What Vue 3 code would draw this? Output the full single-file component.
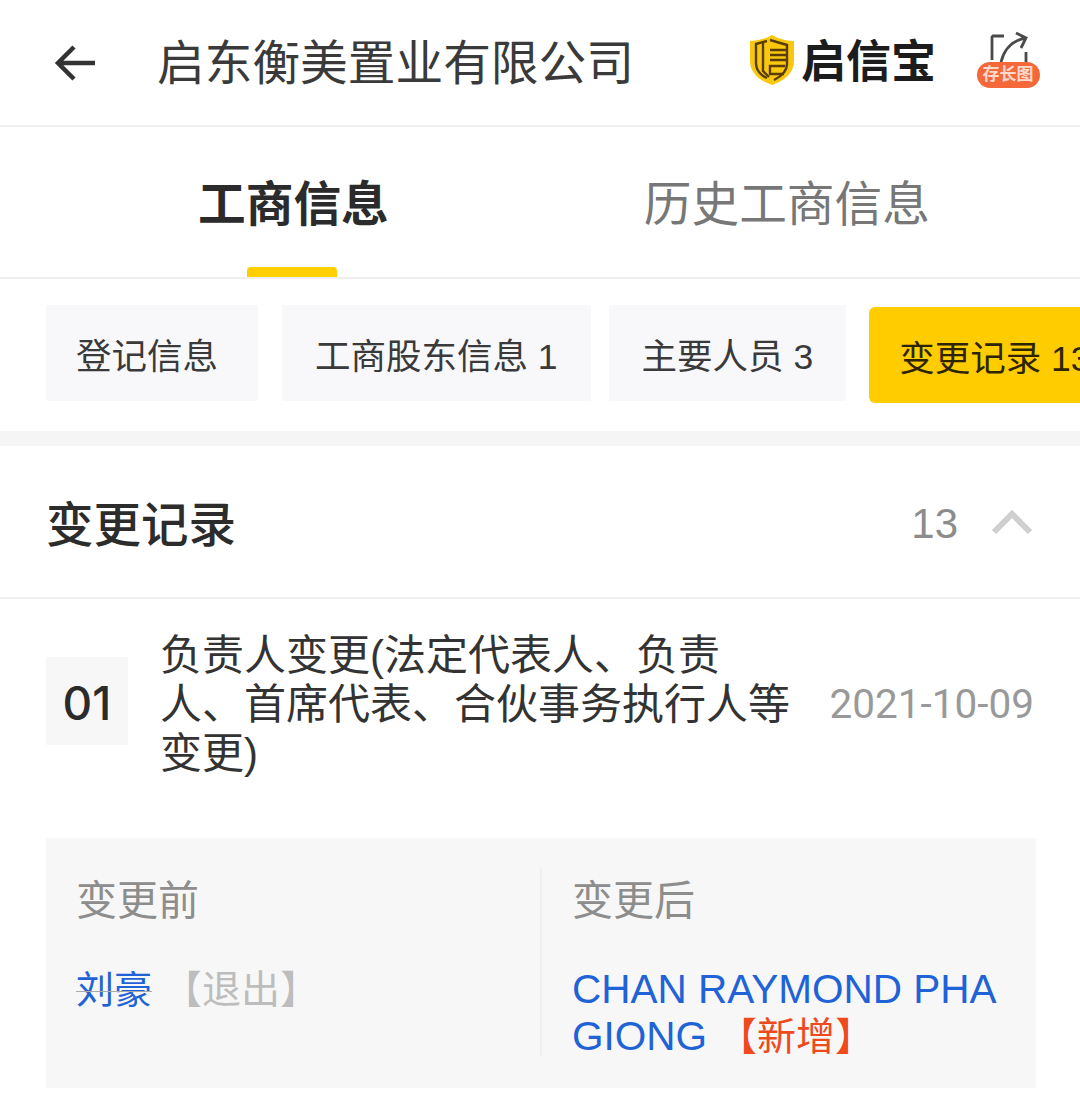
<template>
  <div class="page">
    <!-- 顶部导航 -->
    <header class="nav">
      <svg class="back" viewBox="0 0 44 40" width="44" height="40">
        <path d="M41 20H4M20 4L4 20l16 16" fill="none" stroke="#333" stroke-width="4.5" />
      </svg>
      <div class="nav-title">启东衡美置业有限公司</div>
      <div class="brand">
        <svg class="shield" viewBox="0 0 46 52" width="46" height="52">
          <path d="M23 1c7 4 15 6 22 6v20c0 12-10 20-22 24C11 47 1 39 1 27V7c7 0 15-2 22-6z" fill="#f9c80e" />
          <g fill="none" stroke="#5a3d06" stroke-width="2.4">
            <path d="M18 7L7 10v19c0 8 6 13 11 15" />
            <path d="M14 9v28l6 6" />
            <path d="M21 6l17 5v19c0 8-7 13-13 16" />
            <path d="M21 16h16M21 21h16M21 26h16M36 32H21v8h14" />
          </g>
        </svg>
        <span class="brand-name">启信宝</span>
      </div>
      <div class="save">
        <svg viewBox="0 0 64 34" width="64" height="34">
          <g fill="none" stroke="#4a4a4a" stroke-width="2.8">
            <path d="M28 6H17l-1 1v23" />
            <path d="M25 32c3-12 11-22 25-24M40 3l10 5-5 10" />
            <path d="M50 22v10" />
          </g>
        </svg>
        <span class="save-badge">存长图</span>
      </div>
    </header>

    <!-- 一级 tab -->
    <div class="tabs">
      <div v-for="t in tabs" :key="t.name" class="tab" :class="{ active: t.active }">{{ t.name }}</div>
    </div>

    <!-- 二级 tab -->
    <div class="chips">
      <div v-for="c in chips" :key="c.name" class="chip" :class="{ on: c.on }">{{ c.name }}</div>
    </div>

    <div class="band"></div>

    <div class="section-head">
      <div class="section-title">变更记录</div>
      <div class="section-count">13</div>
      <svg viewBox="0 0 44 28" width="44" height="28">
        <path d="M4 24L22 6l18 18" fill="none" stroke="#cfcfcf" stroke-width="6" />
      </svg>
    </div>

    <div class="record">
      <div class="num">01</div>
      <div class="record-title">负责人变更(法定代表人、负责<br />人、首席代表、合伙事务执行人等<br />变更)</div>
      <div class="record-date">2021-10-09</div>
    </div>

    <div class="compare">
      <div class="col">
        <div class="col-label">变更前</div>
        <div class="col-value">
          <span class="name strike">刘豪</span><span class="tag tag-out">【退出】</span>
        </div>
      </div>
      <div class="col col-right">
        <div class="col-label">变更后</div>
        <div class="col-value">
          <div class="name latin">CHAN RAYMOND PHA</div>
          <div><span class="name latin">GIONG</span><span class="tag tag-new">【新增】</span></div>
        </div>
      </div>
    </div>
  </div>
</template>

<script setup>
const tabs = [
  { name: '工商信息', active: true },
  { name: '历史工商信息', active: false }
]

const chips = [
  { name: '登记信息' },
  { name: '工商股东信息 1' },
  { name: '主要人员 3' },
  { name: '变更记录 13', on: true }
]
</script>

<style>
html,
body {
  margin: 0;
  background: #fff;
}
</style>

<style scoped>
.page {
  width: 1080px;
  height: 1101px;
  overflow: hidden;
  background: #fff;
  font-family: "Liberation Sans", "Noto Sans CJK SC", sans-serif;
  color: #333;
}

.nav {
  height: 125px;
  display: flex;
  align-items: center;
  padding: 0 40px 0 54px;
  border-bottom: 2px solid #f1f1f1;
}

.back {
  flex: none;
}

.nav-title {
  flex: none;
  margin-left: 59px;
  font-size: 47.7px;
  line-height: 62px;
  padding-top: 2px;
  color: #3a3a3a;
  white-space: nowrap;
}

.brand {
  display: flex;
  align-items: center;
  margin-left: auto;
  flex: none;
}

.shield {
  margin-bottom: 6px;
}

.brand-name {
  margin-left: 6px;
  font-size: 45px;
  font-weight: 700;
  color: #1c1c1c;
  line-height: 54px;
}

.save {
  flex: none;
  width: 64px;
  margin-left: 40px;
  margin-bottom: 7px;
  display: flex;
  flex-direction: column;
  align-items: center;
}

.save svg {
  display: block;
}

.save-badge {
  width: 63px;
  height: 26px;
  margin-top: -2px;
  border-radius: 13px;
  background: #f4683a;
  color: #ffd9cb;
  font-size: 17px;
  font-weight: 700;
  line-height: 26px;
  text-align: center;
}

.tabs {
  height: 150px;
  display: flex;
  border-bottom: 2px solid #eeeeee;
}

.tab {
  position: relative;
  flex: none;
  margin-left: 255px;
  font-size: 47.7px;
  line-height: 155px;
  color: #777;
  white-space: nowrap;
}

.tab.active {
  margin-left: 198px;
  font-weight: 700;
  color: #2b2b2b;
}

.tab.active::after {
  content: "";
  position: absolute;
  left: 49px;
  bottom: 0;
  width: 90px;
  height: 10px;
  border-radius: 4px 4px 0 0;
  background: #ffcf00;
}

.chips {
  display: flex;
  gap: 18px;
  padding: 26px 0 28px 46px;
  align-items: flex-start;
  white-space: nowrap;
}

.chip {
  flex: none;
  height: 96px;
  padding: 0 33px;
  background: #f8f8fa;
  font-size: 35.5px;
  line-height: 104px;
  color: #3a3a3a;
}

.chip:first-child {
  width: 152px;
  padding: 0 30px;
  margin-right: 6px;
}

.chip.on {
  margin-top: 2px;
  margin-left: 5px;
  padding-left: 30px;
  border-radius: 6px;
  background: #ffcc00;
  color: #2e2500;
}

.band {
  height: 15px;
  background: #f5f5f5;
}

.section-head {
  height: 151px;
  display: flex;
  align-items: center;
  padding: 0 46px;
  border-bottom: 2px solid #f1f1f1;
}

.section-title {
  flex: 1;
  font-size: 47.5px;
  font-weight: 500;
  color: #2c2c2c;
}

.section-count {
  margin-right: 32px;
  font-size: 42px;
  padding-top: 4px;
  color: #8c8c8c;
}

.record {
  display: flex;
  align-items: center;
  padding: 32px 46px 60px;
}

.num {
  flex: none;
  width: 82px;
  height: 88px;
  margin-bottom: 7px;
  background: #f7f7f7;
  font-family: Inter, "Liberation Sans", sans-serif;
  font-size: 46px;
  font-weight: 500;
  line-height: 92px;
  text-align: center;
  color: #2b2b2b;
}

.record-title {
  flex: none;
  margin-left: 32px;
  font-size: 42px;
  line-height: 49px;
  color: #333;
  white-space: nowrap;
}

.record-date {
  margin-left: auto;
  font-family: Roboto, "Liberation Sans", sans-serif;
  font-size: 40.5px;
  margin-bottom: 2px;
  color: #999;
}

.compare {
  margin: 0 44px 0 46px;
  height: 250px;
  display: flex;
  background: #f7f7f7;
}

.col {
  box-sizing: border-box;
  width: 494px;
  padding: 36px 30px 0;
}

.col-right {
  width: 496px;
  padding: 36px 30px 0 32px;
  position: relative;
}

.col-right::before {
  content: "";
  position: absolute;
  left: 0;
  top: 30px;
  bottom: 32px;
  border-left: 2px solid #f0f0f0;
}

.col-label {
  font-size: 41px;
  line-height: 54px;
  color: #8d8d8d;
}

.col-value {
  margin-top: 38px;
  font-size: 38px;
  line-height: 47px;
}

.name {
  color: #1f63d6;
}

.latin {
  font-size: 40.5px;
}

.strike {
  text-decoration: line-through;
  text-decoration-color: #aaa;
  text-decoration-thickness: 1px;
}

.tag {
  margin-left: 11px;
  font-size: 39px;
}

.tag-out {
  color: #bdbdbd;
}

.tag-new {
  color: #ee4a1e;
}
</style>
